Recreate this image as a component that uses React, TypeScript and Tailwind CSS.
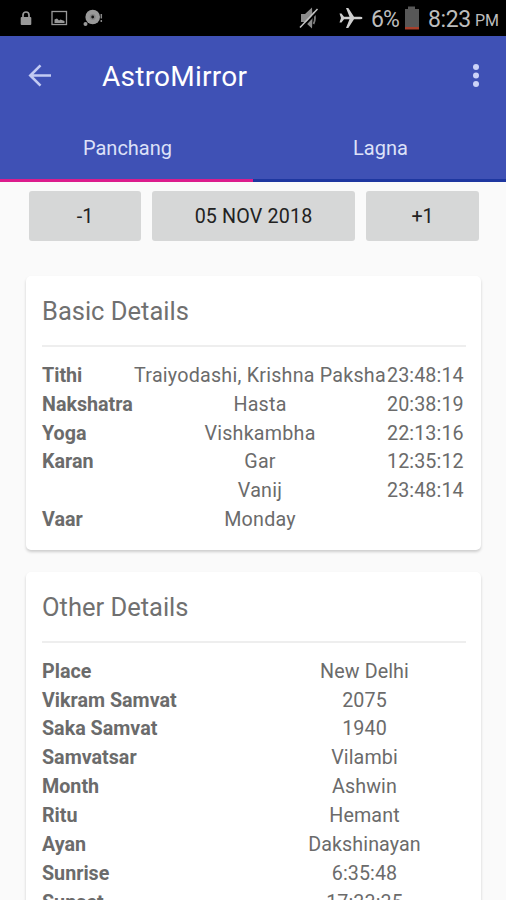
import React from 'react';

const basicRows = [
  ['Tithi', 'Traiyodashi, Krishna Paksha', '23:48:14'],
  ['Nakshatra', 'Hasta', '20:38:19'],
  ['Yoga', 'Vishkambha', '22:13:16'],
  ['Karan', 'Gar', '12:35:12'],
  ['', 'Vanij', '23:48:14'],
  ['Vaar', 'Monday', ''],
];

const otherRows = [
  ['Place', 'New Delhi'],
  ['Vikram Samvat', '2075'],
  ['Saka Samvat', '1940'],
  ['Samvatsar', 'Vilambi'],
  ['Month', 'Ashwin'],
  ['Ritu', 'Hemant'],
  ['Ayan', 'Dakshinayan'],
  ['Sunrise', '6:35:48'],
  ['Sunset', '17:33:35'],
];

const StatusBar: React.FC = () => (
  <div className="h-9 shrink-0 bg-black flex items-center text-[#bdbdbd]">
    <svg className="ml-5 w-3 h-4" viewBox="0 0 12 16" fill="none">
      <path d="M3 8V5a3 3 0 0 1 6 0v3" stroke="#999" strokeWidth="1.7" />
      <rect x="0.7" y="7" width="10.6" height="8" rx="1" fill="#999" />
    </svg>
    <svg className="ml-[19px] w-[17px] h-4" viewBox="0 0 17 16" fill="none">
      <rect x="1" y="1.5" width="14.5" height="13" stroke="#999" strokeWidth="1.3" />
      <path d="M3.5 13V9.5l2.5-1 2 2 1.5-1 4 1.5v2z" fill="#999" />
    </svg>
    <svg className="ml-[15px] w-5 h-[18px]" viewBox="0 0 20 18">
      <circle cx="9.7" cy="8" r="7.3" fill="#999" />
      <circle cx="9.7" cy="8" r="3" fill="#858585" />
      <circle cx="9.7" cy="8" r="1.4" fill="#111" />
      <circle cx="2.5" cy="15" r="2" fill="#999" />
      <path d="M18.3 5v4.5M18.3 11v2" stroke="#888" strokeWidth="1.5" />
    </svg>
    <div className="flex-1" />
    <svg className="w-5 h-6" viewBox="0 0 20 24">
      <path d="M2 8h4l7-6.500q1 10 0 21l-7-6.500H2z" fill="#8c8c8c" />
      <path d="M14.500 6q3 6 0 12" stroke="#7c7c7c" strokeWidth="1.800" fill="none" />
      <path d="M2.500 22.500L19.500 4.500" stroke="#000" strokeWidth="2" />
      <path d="M1 21.500L18.500 3" stroke="#c4c4c4" strokeWidth="1.500" />
    </svg>
    <svg className="ml-5 w-6 h-6" viewBox="0 0 24 24">
      <path
        d="M0.500 7.500h2l2.500 3.200h5.500L7 2h2.300L15 10.700h6q2.500 0 2.500 1.300T21 13.300h-6L9.300 22H7l3.500-8.700H5l-2.500 3.200h-2L2 12z"
        fill="#cfcfcf"
      />
    </svg>
    <span className="ml-2 mt-[3px] w-[29px] text-[23px] leading-9 tracking-[-1px] whitespace-nowrap">6%</span>
    <svg className="ml-[4px] w-4 h-6" viewBox="0 0 16 24">
      <path d="M1 3h3V0.5h7V3h4v20H1z" fill="#575757" />
      <path d="M1 21h14v2.5H1z" fill="#a8402c" />
    </svg>
    <span className="ml-2 mt-[3px] w-[43px] text-[23px] leading-9 tracking-[-0.4px] whitespace-nowrap">8:23</span>
    <span className="ml-[4px] mr-[7px] w-6 text-[16px] leading-5 mt-[6px] whitespace-nowrap">PM</span>
  </div>
);

const Header: React.FC = () => (
  <div className="h-[146px] shrink-0 bg-[#3f51b5] flex flex-col">
    <div className="h-[79px] flex items-center pl-7 pr-[26px]">
      <svg className="w-6 h-6" viewBox="0 0 24 24" fill="none" stroke="#c3cbf3" strokeWidth="2.6">
        <path d="M23 11.500H2.500M12.500 1.300L2.300 11.500l10.200 10.200" />
      </svg>
      <h1 className="ml-[50px] flex-1 pt-[3px] text-[28px] font-normal tracking-[0.25px] leading-9 text-white">AstroMirror</h1>
      <svg className="w-2 h-6" viewBox="0 0 8 24" fill="#ccd3f8">
        <circle cx="4" cy="3" r="3" />
        <circle cx="4" cy="11.5" r="3" />
        <circle cx="4" cy="20" r="3" />
      </svg>
    </div>
    <div className="flex-1 flex text-xl text-[#dde1f8]">
      <button className="flex-1 pl-[2px] pt-[1px] border-b-[3px] border-[#dc1c8c]">Panchang</button>
      <button className="flex-1 pl-[2px] pt-[1px] border-b-[3px] border-[#1e37a0]">Lagna</button>
    </div>
  </div>
);

const Card: React.FC<{ title: string; children: React.ReactNode }> = ({ title, children }) => (
  <section className="ml-[26px] mr-[25px] pl-4 pr-[15px] bg-white rounded-[5px] shadow-[0_2px_3px_rgba(0,0,0,0.18)] text-[#6b6b6b]">
    <h2 className="h-[71px] pt-px border-b-2 border-[#eeeeee] text-[25.5px] leading-[69px] text-[#707070]">{title}</h2>
    <div className="pt-[15px] text-[19.7px] leading-[28.8px]">{children}</div>
  </section>
);

export default function App() {
  return (
    <div className="w-full h-[900px] overflow-hidden flex flex-col bg-[#fafafa] font-['Roboto',sans-serif]">
      <StatusBar />
      <Header />

      <div className="mt-[9px] pl-[29px] pr-[27px] shrink-0 flex gap-[11px] text-[19.7px] text-[#222]">
        <button className="w-[112px] h-[50px] pt-[2px] rounded-[3px] bg-[#d6d7d7]">-1</button>
        <button className="flex-1 h-[50px] pt-[2px] rounded-[3px] bg-[#d6d7d7] tracking-[0.15px]">05 NOV 2018</button>
        <button className="w-[113px] h-[50px] pt-[2px] rounded-[3px] bg-[#d6d7d7]">+1</button>
      </div>

      <main className="pt-[35px] flex flex-col gap-[22px]">
        <Card title="Basic Details">
          <div className="pb-[15px]">
            {basicRows.map(([label, value, time], i) => (
              <div key={i} className="h-[28.8px] grid grid-cols-[92px_252px_79px] whitespace-nowrap">
                <span className="font-bold">{label}</span>
                <span className="text-center tracking-[0.23px]">{value}</span>
                <span className="pl-px tracking-[0.1px]">{time}</span>
              </div>
            ))}
          </div>
        </Card>

        <Card title="Other Details">
          {otherRows.map(([label, value]) => (
            <div key={label} className="h-[28.85px] grid grid-cols-[221px_202px] whitespace-nowrap">
              <span className="font-bold">{label}</span>
              <span className="pl-px text-center tracking-[0.1px]">{value}</span>
            </div>
          ))}
        </Card>
      </main>
    </div>
  );
}
